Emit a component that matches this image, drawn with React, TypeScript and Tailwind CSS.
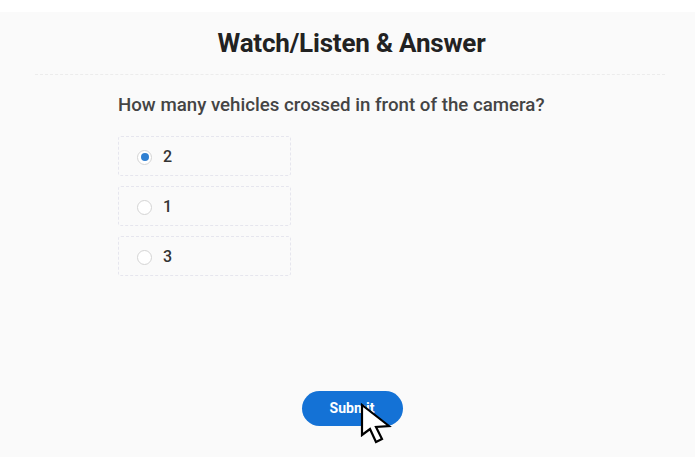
import React from "react";

export default function App() {
  const options = [
    { label: "2", checked: true },
    { label: "1", checked: false },
    { label: "3", checked: false },
  ];
  return (
    <div className="w-[695px] h-[470px] bg-white pt-[12px]" style={{ fontFamily: "Roboto, 'Liberation Sans', sans-serif" }}>
      <div className="relative h-[445px] bg-[#fafafa] flex flex-col">
        <h1 className="text-center text-[26px] font-bold text-[#222] leading-none pt-[18px] pl-[8px] tracking-[-0.2px]">
          Watch/Listen &amp; Answer
        </h1>
        <div className="ml-[35px] mr-[30px] mt-[18px] border-t border-dashed border-[#ececec]" />
        <div className="pl-[118px] pt-[19px]">
          <p className="text-[18.7px] font-medium text-[#444] leading-[22px]">
            How many vehicles crossed in front of the camera?
          </p>
          <div className="mt-[20px] flex flex-col gap-[10px]">
            {options.map((o) => (
              <div
                key={o.label}
                className="w-[173px] h-[40px] border border-dashed border-[#e6e6ee] rounded-[3px] flex items-center pl-[18px] gap-[11px] pt-[2px]"
              >
                <span className="w-[15px] h-[15px] rounded-full border border-[#d4d4d4] bg-white flex items-center justify-center">
                  {o.checked && <span className="w-[8px] h-[8px] rounded-full bg-[#2f7fd1]" />}
                </span>
                <span className="text-[16px] font-medium text-[#333]">{o.label}</span>
              </div>
            ))}
          </div>
        </div>
        <div className="flex-1" />
        <div className="flex justify-center pb-[31px] pl-[9px]">
          <button className="w-[101px] h-[35px] rounded-full bg-[#1472d6] text-white text-[14px] font-bold">
            Submit
          </button>
        </div>
        <svg className="absolute left-[360px] top-[391px]" width="34" height="42" viewBox="0 0 34 42">
          <path
            d="M2 2 L2 32 L10 26 L16 39 L22 36 L16 24 L29 23 Z"
            fill="white"
            stroke="black"
            strokeWidth="2.2"
            strokeLinejoin="miter"
          />
        </svg>
      </div>
    </div>
  );
}
